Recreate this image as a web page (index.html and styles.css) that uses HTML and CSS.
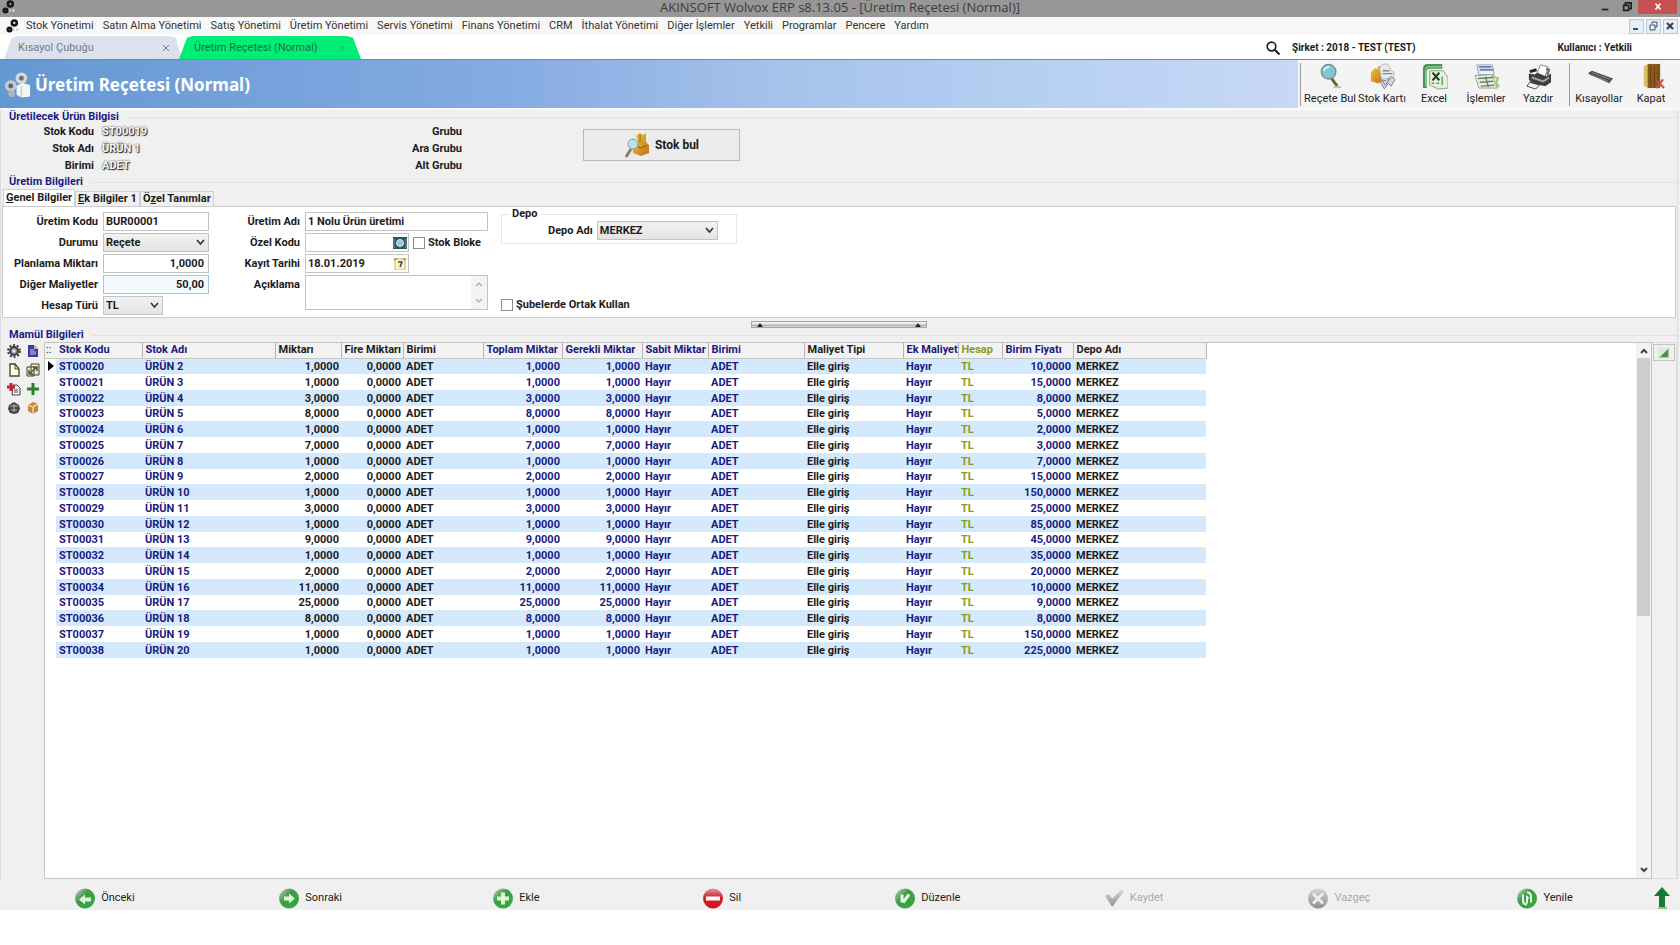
FILE: index.html
```html
<!DOCTYPE html>
<html lang="tr">
<head>
<meta charset="utf-8">
<title>AKINSOFT Wolvox ERP</title>
<link rel="stylesheet" href="styles.css">
</head>
<body>
<svg class="defs" aria-hidden="true">
  <defs>
    <linearGradient id="green" x1="0" y1="0" x2="1" y2="1"><stop offset="0" stop-color="#c9d3c9"/><stop offset=".4" stop-color="#3f9a48"/><stop offset="1" stop-color="#2fae35"/></linearGradient>
    <linearGradient id="red" x1="0" y1="0" x2="0" y2="1"><stop offset="0" stop-color="#dd9a9a"/><stop offset=".45" stop-color="#c9242c"/><stop offset="1" stop-color="#d80f18"/></linearGradient>
    <linearGradient id="grey" x1="0" y1="0" x2="0" y2="1"><stop offset="0" stop-color="#d6d6d6"/><stop offset="1" stop-color="#8e8e8e"/></linearGradient>
    <linearGradient id="gold" x1="0" y1="0" x2="1" y2="1"><stop offset="0" stop-color="#f7c948"/><stop offset="1" stop-color="#b96f10"/></linearGradient>
    <symbol id="gears" viewBox="0 0 16 16"><g fill="none" stroke="#161616" stroke-width="3"><circle cx="9.500" cy="4.500" r="2.800"/><circle cx="4" cy="12" r="2"/></g><path d="M8 12h2M11.500 12h3" stroke="#cfd4d4" stroke-width="3"/></symbol>
  </defs>
</svg>
<div class="app">
  <header class="titlebar">
    <svg class="title-icon" viewBox="0 0 16 16"><use href="#gears"/></svg>
    <h1 class="title-text">AKINSOFT Wolvox ERP s8.13.05 - [Üretim Reçetesi (Normal)]</h1>
    <div class="win-buttons">
      <button class="win-button" aria-label="Küçült"><svg viewBox="0 0 12 12"><path d="M2 9h8" stroke="#222" stroke-width="2"/></svg></button>
      <button class="win-button" aria-label="Geri yükle"><svg viewBox="0 0 12 12"><path d="M4 3V1h7v7H9M2 4h6v6H2z" fill="none" stroke="#222" stroke-width="2"/></svg></button>
      <button class="win-button win-close" aria-label="Kapat"><svg viewBox="0 0 12 12"><path d="M3 2l6 7M9 2L3 9" stroke="#fff" stroke-width="2"/></svg></button>
    </div>
  </header>

  <nav class="menubar">
    <svg class="menu-icon" viewBox="0 0 16 16"><use href="#gears"/></svg>
    <a href="#">Stok Yönetimi</a><a href="#">Satın Alma Yönetimi</a><a href="#">Satış Yönetimi</a><a href="#">Üretim Yönetimi</a><a href="#">Servis Yönetimi</a><a href="#">Finans Yönetimi</a><a href="#">CRM</a><a href="#">İthalat Yönetimi</a><a href="#">Diğer İşlemler</a><a href="#">Yetkili</a><a href="#">Programlar</a><a href="#">Pencere</a><a href="#">Yardım</a>
    <div class="mdi-buttons">
      <button class="mdi-button" aria-label="Pencereyi küçült"><svg viewBox="0 0 12 12"><path d="M3 9h5" stroke="#3d4f66" stroke-width="2"/></svg></button>
      <button class="mdi-button" aria-label="Pencereyi geri yükle"><svg viewBox="0 0 12 12"><path d="M5 4V2h5v5H8M3 5h5v5H3z" fill="none" stroke="#3d4f66"/></svg></button>
      <button class="mdi-button" aria-label="Pencereyi kapat"><svg viewBox="0 0 12 12"><path d="M3 3l6 6M9 3L3 9" stroke="#2f3f55" stroke-width="2"/></svg></button>
    </div>
  </nav>

  <div class="tabstrip">
    <a class="doc-tab" href="#">Kısayol Çubuğu<svg class="tab-x" viewBox="0 0 8 8"><path d="M1 1l6 6M7 1L1 7" stroke="#77808c"/></svg></a>
    <a class="doc-tab doc-tab-active" href="#">Üretim Reçetesi (Normal)<svg class="tab-x" viewBox="0 0 8 8"><path d="M1 1l6 6M7 1L1 7" stroke="#19c463"/></svg></a>
    <div class="session">
      <svg class="search-icon" viewBox="0 0 14 14"><circle cx="5.500" cy="5.500" r="4.300" fill="none" stroke="#222" stroke-width="1.700"/><path d="M8.500 8.500l5 5" stroke="#222" stroke-width="2.200"/></svg>
      <span class="company">Şirket : 2018 - TEST (TEST)</span>
      <span class="user">Kullanıcı : Yetkili</span>
    </div>
  </div>

  <section class="banner">
    <div class="banner-title">
      <svg class="banner-icon" viewBox="0 0 28 28"><circle cx="18" cy="7" r="6" fill="#d6dade"/><circle cx="18" cy="7" r="2.500" fill="#6a7076"/><circle cx="7" cy="15" r="6" fill="#c3c9ce"/><circle cx="7" cy="15" r="2.500" fill="#5b6168"/><circle cx="8" cy="23" r="3.500" fill="#b1b6ba"/><path d="M13 15l6-3 8 2v12l-9 1-5-3z" fill="#f3f5f7"/><path d="M18 15v12" stroke="#b8bec4"/></svg>
      <h2>Üretim Reçetesi (Normal)</h2>
    </div>
    <div class="toolbar">
      <div class="tool-group">
        <button class="tool"><svg viewBox="0 0 28 28"><path d="M15 16l6 8" stroke="#6e6338" stroke-width="3"/><path d="M17 25h8" stroke="#c9c39c" stroke-width="2"/><circle cx="12" cy="9" r="7.500" fill="#7cc9d2" stroke="#7d8f96" stroke-width="1.500"/><path d="M7 8q2-4 6-4" stroke="#d5f4f6" stroke-width="2" fill="none"/></svg>Reçete Bul</button>
        <button class="tool"><svg viewBox="0 0 28 28"><path d="M2 9l5-4 2 2V4l6-2v17l-6 2-7-2z" fill="url(#gold)"/><path d="M11 6q1-5 6-5 5 1 5 6l4 3-1 5-12 2z" fill="#e8e8e8" stroke="#b5b5b5"/><path d="M14 8h7M14 11h10" stroke="#888" stroke-width="1.500"/><path d="M11 19l5 8 4-6 3 3 4-7-4-3-5 4z" fill="#d3d5da" stroke="#858992"/><path d="M14 19l3 4 5-7" stroke="#757983" fill="none"/></svg>Stok Kartı</button>
        <button class="tool"><svg viewBox="0 0 28 28"><path d="M2 26V6q0-5 5-5h15v5H9q-3 0-3 3v17z" fill="#4b9350"/><path d="M5 24V7q0-3 3-3h13" fill="none" stroke="#b9e0b5"/><path d="M9 8h14l5 7v11l-10 1-9-4z" fill="#e3f2dc" stroke="#82a878"/><path d="M12 10l7 8M19 10l-7 8" stroke="#173919" stroke-width="2.200"/><path d="M11 21h3M16 21h3M22 14v9" stroke="#6a9b68" stroke-width="1.500"/></svg>Excel</button>
        <button class="tool"><svg viewBox="0 0 28 28"><path d="M4 2h16l2 10H6z" fill="#eef1f8" stroke="#8e9cc9"/><path d="M6 4h13M7 7h14" stroke="#6d7eb8" stroke-width="2"/><path d="M2 13l18-1 5 14H6z" fill="#e6eddc" stroke="#97a78d"/><path d="M5 16l16-1M7 20l14-1M8 24l14-1M13 14l3 11" stroke="#6e8068" stroke-width="1.500"/><path d="M19 13l7 3-2 4 3 5" stroke="#97c86f" stroke-width="2" fill="none"/></svg>İşlemler</button>
        <button class="tool"><svg viewBox="0 0 28 28"><path d="M12 12l4-10 8 2-3 10z" fill="#fff" stroke="#888"/><path d="M4 11l6 1 3-2 9 4 5-3v9l-6 4-14-3-3-4z" fill="#3d3f42"/><path d="M7 15l12 4 6-4" stroke="#a0a2a4" stroke-width="2" fill="none"/><path d="M5 20l10 3-4 4-9-3z" fill="#f4f4f4" stroke="#444"/><path d="M5 9l7-2" stroke="#222" stroke-width="3"/><path d="M22 6l3 1-2 6" stroke="#666" fill="none" stroke-width="2"/></svg>Yazdır</button>
      </div>
      <div class="tool-group tool-group-end">
        <button class="tool"><svg viewBox="0 0 28 28"><path d="M2 11l4-3 22 8-4 5z" fill="#48494c"/><path d="M6 10l19 7M4 12l19 7" stroke="#8b8c8f"/><path d="M24 21l4-5" stroke="#aaa"/></svg>Kısayollar</button>
        <button class="tool"><svg viewBox="0 0 28 28"><path d="M6 3l5-2v25l-5-2z" fill="#d8c06a"/><path d="M10 1h13v25H10z" fill="#8a5a1d"/><path d="M13 3v22M17 3v22M21 3v22" stroke="#6b4212"/><path d="M19 18l8 8M26 17l-7 9" stroke="#cf4a45" stroke-width="2.200"/></svg>Kapat</button>
      </div>
    </div>
  </section>

  <main class="content">
    <section class="product">
      <h3 class="group-title">Üretilecek Ürün Bilgisi</h3>
      <div class="product-body">
        <dl class="facts">
          <dt>Stok Kodu</dt><dd>ST00019</dd>
          <dt>Stok Adı</dt><dd>ÜRÜN 1</dd>
          <dt>Birimi</dt><dd>ADET</dd>
        </dl>
        <dl class="facts facts-groups">
          <dt>Grubu</dt><dd></dd>
          <dt>Ara Grubu</dt><dd></dd>
          <dt>Alt Grubu</dt><dd></dd>
        </dl>
        <button class="find-button"><svg viewBox="0 0 26 26"><path d="M12 4l4-3 3 2 3-2v9l3 3v8l-8 3-8-3V11l5-2z" fill="url(#gold)"/><path d="M16 2v8M12 14l5 2 6-3" stroke="#8f5a10" fill="none"/><path d="M7 17l-5 8" stroke="#8d7a78" stroke-width="3"/><circle cx="9" cy="12" r="5" fill="#b9e2ee" stroke="#8a9ba5"/></svg>Stok bul</button>
      </div>
    </section>

    <section class="production">
      <h3 class="group-title">Üretim Bilgileri</h3>
      <div class="page-tabs" role="tablist">
        <button class="page-tab page-tab-active" role="tab"><u>G</u>enel Bilgiler</button><button class="page-tab" role="tab"><u>E</u>k Bilgiler 1</button><button class="page-tab" role="tab">Ö<u>z</u>el Tanımlar</button>
      </div>
      <form class="page">
        <div class="fields fields-left">
          <label for="kod">Üretim Kodu</label><input id="kod" class="box" value="BUR00001">
          <label for="durum">Durumu</label><select id="durum" class="box pick"><option>Reçete</option></select>
          <label for="miktar">Planlama Miktarı</label><input id="miktar" class="box number" value="1,0000">
          <label for="maliyet">Diğer Maliyetler</label><input id="maliyet" class="box number box-focus" value="50,00">
          <label for="hesap">Hesap Türü</label><select id="hesap" class="box pick pick-short"><option>TL</option></select>
        </div>
        <div class="fields fields-mid">
          <label for="ad">Üretim Adı</label><input id="ad" class="box" value="1 Nolu Ürün üretimi">
          <label for="ozel">Özel Kodu</label>
          <div class="row">
            <div class="with-button"><input id="ozel" class="box"><button type="button" class="inner-button" aria-label="Özel kod seç"><svg viewBox="0 0 14 12"><path d="M0 0h14v12H0z" fill="#2c5963"/><circle cx="7" cy="6" r="3.500" fill="#9fc7d2" stroke="#d6e6ea"/><path d="M1 2v9M13 2v9" stroke="#7b98a0"/></svg></button></div>
            <label class="check"><input type="checkbox">Stok Bloke</label>
          </div>
          <label for="tarih">Kayıt Tarihi</label>
          <div class="row">
            <div class="with-button"><input id="tarih" class="box" value="18.01.2019"><button type="button" class="inner-button" aria-label="Tarih seç"><svg viewBox="0 0 14 12"><path d="M2 1h10v11H2z" fill="#fff6c4" stroke="#c9b36b"/><path d="M1 2l3-2M13 2l-3-2" stroke="#b59a3c" stroke-width="2"/><path d="M5 4h4l-2 5" stroke="#3c3c6a" stroke-width="1.500" fill="none"/></svg></button></div>
          </div>
          <label for="aciklama">Açıklama</label>
          <div class="memo"><textarea id="aciklama" class="box"></textarea><div class="memo-bar"><svg viewBox="0 0 8 6"><path d="M1 5l3-3 3 3" fill="none" stroke="#b0b0b0" stroke-width="1.500"/></svg><svg viewBox="0 0 8 6"><path d="M1 1l3 3 3-3" fill="none" stroke="#b0b0b0" stroke-width="1.500"/></svg></div></div>
        </div>
        <div class="fields-right">
          <fieldset class="depot"><legend>Depo</legend><label for="depo">Depo Adı</label><select id="depo" class="box pick"><option>MERKEZ</option></select></fieldset>
          <label class="check"><input type="checkbox">Şubelerde Ortak Kullan</label>
        </div>
      </form>
    </section>

    <div class="splitter"><button class="splitter-grip" aria-label="Bölmeyi daralt"><i></i><i></i></button></div>

    <section class="materials">
      <h3 class="group-title">Mamül Bilgileri</h3>
      <div class="materials-body">
        <div class="side-tools">
          <button aria-label="Ayarlar"><svg viewBox="0 0 14 14"><circle cx="7" cy="7" r="4" fill="#999" stroke="#3c3c3c" stroke-width="2"/><circle cx="7" cy="7" r="6" fill="none" stroke="#3c3c3c" stroke-width="1.800" stroke-dasharray="2 1.800"/><circle cx="7" cy="7" r="1.500" fill="#eee"/></svg></button>
          <button aria-label="Rapor"><svg viewBox="0 0 14 14"><path d="M2 1h6l4 4v8H2z" fill="#3b3b9d"/><path d="M4 6h4M4 8h6M4 10h6" stroke="#c8c8f0"/><path d="M8 1v4h4" fill="#bbb"/></svg></button>
          <button aria-label="Yeni"><svg viewBox="0 0 14 14"><path d="M3 1h5l4 5v7H3z" fill="#fffff0" stroke="#444422" stroke-width="1.300"/><path d="M8 1v5h4" fill="none" stroke="#444422"/></svg></button>
          <button aria-label="Kopyala"><svg viewBox="0 0 14 14"><path d="M1 4h7v9H1zM5 1h8v11H5z" fill="#eeedd0" stroke="#454530"/><path d="M3 11l8-7M7 4h4v4M3 7v4h4" fill="none" stroke="#56563a" stroke-width="1.500"/></svg></button>
          <button aria-label="Kaydı sil"><svg viewBox="0 0 14 14"><path d="M6 3h4l3 3v7H5z" fill="#eee" stroke="#444"/><path d="M7 8h4M7 10h4" stroke="#555"/><path d="M4 1v8M0 5h8" stroke="#c3203b" stroke-width="3"/></svg></button>
          <button aria-label="Ekle"><svg viewBox="0 0 14 14"><path d="M7 1v12M1 7h12" stroke="#23852c" stroke-width="3"/></svg></button>
          <button aria-label="Ürün"><svg viewBox="0 0 14 14"><path d="M2 4l5-3 5 3 1 4-2 4-4 1-4-1-2-4z" fill="#454545"/><path d="M3 5h8M4 9h6M7 3v8" stroke="#bbb"/></svg></button>
          <button aria-label="Paket"><svg viewBox="0 0 14 14"><path d="M2 4l5-3 5 2v7l-5 3-5-3z" fill="#c8853c"/><path d="M2 4l5 2 5-3M7 6v7" stroke="#f3d3a3" fill="none" stroke-width="1.500"/></svg></button>
        </div>
        <div class="grid-box">
          <table class="grid">
            <colgroup><col class="w-mark"><col class="w-code"><col class="w-name"><col class="w-qty"><col class="w-waste"><col class="w-unit"><col class="w-total"><col class="w-unit"><col class="w-fixed"><col class="w-unit2"><col class="w-cost"><col class="w-extra"><col class="w-account"><col class="w-price"><col class="w-name"></colgroup>
            <thead><tr><th class="mark">::</th><th class="navy">Stok Kodu</th><th class="navy">Stok Adı</th><th>Miktarı</th><th>Fire Miktarı</th><th>Birimi</th><th class="navy">Toplam Miktar</th><th class="navy">Gerekli Miktar</th><th class="navy">Sabit Miktar</th><th class="navy">Birimi</th><th>Maliyet Tipi</th><th class="navy">Ek Maliyet</th><th class="olive">Hesap</th><th class="navy">Birim Fiyatı</th><th>Depo Adı</th></tr></thead>
            <tbody id="rows"></tbody>
          </table>
          <div class="scrollbar"><svg viewBox="0 0 10 8"><path d="M2 6l3-3 3 3" fill="none" stroke="#444" stroke-width="2"/></svg><div class="track"><div class="thumb"></div></div><svg viewBox="0 0 10 8"><path d="M2 2l3 3 3-3" fill="none" stroke="#444" stroke-width="2"/></svg></div>
        </div>
        <div class="side-right"><button aria-label="Genişlet"><svg viewBox="0 0 14 14"><path d="M0 0h14v14H0z" fill="#d7efd2"/><path d="M12 2v10H2z" fill="#4e8f4c"/></svg></button></div>
      </div>
    </section>
  </main>

  <footer class="actions">
    <div class="action-list">
      <button class="action"><svg viewBox="0 0 20 20"><circle cx="10" cy="10" r="10" fill="url(#green)"/><path d="M4 11l6-5v3h6v4h-6v3z" fill="#dcf7d6"/></svg>Önceki</button>
      <button class="action"><svg viewBox="0 0 20 20"><circle cx="10" cy="10" r="10" fill="url(#green)"/><path d="M16 10l-6-5v3H5v4h5v3z" fill="#dcf7d6"/></svg>Sonraki</button>
      <button class="action"><svg viewBox="0 0 20 20"><circle cx="10" cy="10" r="10" fill="url(#green)"/><path d="M10 4v12M4 10h12" stroke="#d9f8d4" stroke-width="4"/></svg>Ekle</button>
      <button class="action"><svg viewBox="0 0 20 20"><circle cx="10" cy="10" r="10" fill="url(#red)"/><path d="M3 10h14" stroke="#fff" stroke-width="4"/></svg>Sil</button>
      <button class="action"><svg viewBox="0 0 20 20"><circle cx="10" cy="10" r="10" fill="url(#green)"/><path d="M7 14V6M8 14l6-8" stroke="#e6fbe2" stroke-width="3"/></svg>Düzenle</button>
      <button class="action" disabled><svg viewBox="0 0 22 20"><path d="M1 7l4-2 4 5 9-9 4 1L9 19z" fill="url(#grey)"/></svg>Kaydet</button>
      <button class="action" disabled><svg viewBox="0 0 20 20"><circle cx="10" cy="10" r="10" fill="url(#grey)"/><path d="M5 5l10 10M15 5L5 15" stroke="#eee" stroke-width="3"/></svg>Vazgeç</button>
      <button class="action"><svg viewBox="0 0 20 20"><circle cx="10" cy="10" r="10" fill="url(#green)"/><path d="M6 6v6q0 4 4 4M14 14V8q0-4-4-4" stroke="#e6fbe2" stroke-width="2" fill="none"/><path d="M10 7l3 3h-2v5H9V7z" fill="#e6fbe2"/></svg>Yenile</button>
    </div>
    <button class="up" aria-label="Yukarı"><svg viewBox="0 0 16 22"><path d="M8 0l8 9h-5v11H5V9H0z" fill="#177a2c"/><path d="M4 21h9" stroke="#8cbf95" stroke-width="2"/></svg></button>
  </footer>
</div>
<script src="grid.js"></script>
</body>
</html>
```
FILE: styles.css
```css
* { box-sizing: border-box; }
body { margin: 0; background: #fff; color: #1c1c1c; font: bold 11px/16px Roboto, "Noto Sans", sans-serif; }
button, input, select, textarea { font: inherit; color: inherit; margin: 0; padding: 0; }
button { background: none; border: 0; }
h1, h2, h3, dl, dd { margin: 0; font: inherit; }
a { color: inherit; text-decoration: none; }
svg { display: block; flex: none; }
.defs { position: absolute; width: 0; height: 0; }
.app { display: flex; flex-direction: column; min-height: 910px; margin-bottom: 35px; background: #f0f0f0; }

.titlebar { display: grid; grid-template-columns: 1fr auto 1fr; height: 17px; background: #979797; }
.title-icon { width: 14px; height: 14px; margin-left: 2px; }
.title-text { color: #3c3c3c; font: 13px/15px "Open Sans", sans-serif; }
.win-buttons { display: flex; justify-content: flex-end; padding-right: 3px; }
.win-button { display: flex; align-items: center; justify-content: center; width: 22px; height: 14px; }
.win-button svg { width: 10px; height: 10px; }
.win-close { width: 39px; background: #c75052; }

.menubar { display: flex; align-items: center; gap: 9px; height: 18px; padding: 0 2px 0 6px; background: #f8f8f8; color: #333; font-weight: normal; white-space: nowrap; }
.menu-icon { width: 14px; height: 16px; margin-right: -3px; }
.mdi-buttons { display: flex; gap: 2px; margin-left: auto; }
.mdi-button { width: 15px; height: 15px; border: 1px solid #b9cade; background: #e6eff8; }
.mdi-button svg { width: 12px; height: 12px; }

.tabstrip { display: flex; height: 25px; padding: 1px 0 0 4px; border-bottom: 1px solid #7d8894; background: #fff; }
.doc-tab { display: flex; align-items: center; justify-content: space-between; width: 178px; padding: 0 12px 0 14px; background: #dbe2ec; color: #707a86; clip-path: polygon(0 100%, 8px 8%, 14px 0, 166px 0, 172px 8%, 100% 100%); font-weight: normal; }
.doc-tab-active { width: 182px; padding-left: 15px; padding-right: 15px; margin-left: -3px; background: #00ee76; color: #14743f; clip-path: polygon(0 100%, 8px 8%, 14px 0, 168px 0, 174px 8%, 100% 100%); }
.tab-x { width: 8px; height: 8px; }
.session { display: flex; align-items: center; margin-left: auto; padding-right: 48px; font-size: 10px; }
.search-icon { width: 14px; height: 14px; margin-right: 12px; }
.company { margin-right: 142px; }

.banner { display: flex; height: 50px; border-bottom: 2px solid #fafafa; background: #f4f4f4; }
.banner-title { flex: 1; display: flex; align-items: center; gap: 4px; padding: 2px 0 0 4px; background: linear-gradient(90deg, #6498d2, #84aae2 38%, #a5c2ea 60%, #b6d0f2 80%, #c8d8f6); }
.banner-icon { width: 27px; height: 28px; }
.banner-title h2 { color: #fff; font: bold 17px/24px "Noto Sans", sans-serif; }
.toolbar { display: flex; padding: 3px 3px 0 2px; }
.tool-group { display: flex; height: 43px; padding-left: 3px; border-left: 1px solid #9b9b9b; }
.tool { display: flex; flex-direction: column; align-items: center; width: 52px; font-weight: normal; line-height: 17px; white-space: nowrap; }
.tool svg { width: 27px; height: 27px; }
.tool-group-end { margin-left: 5px; }

.content { flex: 1; display: flex; flex-direction: column; margin-right: 2px; border: solid #dcdcdc; border-width: 0 1px; }
.group-title { display: flex; align-items: center; gap: 8px; padding-left: 8px; color: #1e1c86; line-height: 14px; }
.group-title::after { content: ""; flex: 1; border-top: 1px solid #e2e2e2; }

.product-body { display: flex; }
.facts { display: grid; grid-template-columns: 93px 270px; grid-auto-rows: 17px; column-gap: 8px; line-height: 16px; }
.facts dt { text-align: right; }
.facts dd { color: #fafafa; text-shadow: 1px 1px 1px #222, 0 0 2px #222; }
.facts-groups { grid-template-columns: 90px 105px; }
.find-button { display: flex; align-items: center; justify-content: center; gap: 5px; width: 157px; height: 32px; margin: 5px 0 10px 8px; border: 1px solid #b9b9b9; background: #ececec; font-size: 12px; }
.find-button svg { width: 26px; height: 26px; }

.page-tabs { display: flex; align-items: flex-end; height: 17px; padding-left: 2px; }
.page-tab { height: 15px; padding: 0 2px; border: 1px solid #cfcfcf; border-bottom: 0; line-height: 14px; white-space: nowrap; }
.page-tab-active { height: 17px; background: #fff; }
.page { display: flex; margin: 0 1px; padding: 5px 0 2px; border: 1px solid #cbcbcb; background: #fff; }
.fields { display: grid; grid-auto-rows: 19px; row-gap: 2px; column-gap: 5px; align-items: center; }
.fields > label { text-align: right; line-height: 19px; white-space: nowrap; }
.fields-left { grid-template-columns: 95px 106px; }
.fields-mid { grid-template-columns: 91px 183px; }
.box { display: block; width: 100%; height: 19px; padding: 0 2px; border: 1px solid #c3c3c3; border-radius: 0; background: #fff; line-height: 16px; outline: 0; }
.number { padding-right: 4px; text-align: right; }
.box-focus { border-color: #a9c5dc; background: #f4fbff; }
.pick { appearance: none; background: url("data:image/svg+xml,%3Csvg xmlns='http://www.w3.org/2000/svg' width='9' height='7'%3E%3Cpath d='M1 1l3.500 4L8 1' fill='none' stroke='%23333' stroke-width='1.600'/%3E%3C/svg%3E") no-repeat right 3px center, linear-gradient(#f2f2f2, #e4e4e4); }
.pick-short { width: 60px; }
.row { display: flex; align-items: center; gap: 4px; }
.with-button { display: flex; width: 104px; height: 19px; border: 1px solid #c3c3c3; }
.with-button .box { flex: 1; width: 0; height: 17px; border: 0; }
.inner-button { width: 16px; padding: 2px 1px; }
.inner-button svg { width: 14px; height: 12px; }
.check { display: flex; align-items: center; gap: 3px; line-height: 16px; white-space: nowrap; }
.check input { appearance: none; width: 12px; height: 12px; border: 1px solid #8d8d8d; background: #fff; }
.memo { display: flex; grid-row: span 2; align-self: start; height: 35px; border: 1px solid #c3c3c3; }
.memo textarea { flex: 1; width: 0; height: 33px; border: 0; resize: none; }
.memo-bar { display: flex; flex-direction: column; justify-content: space-between; width: 16px; padding: 5px 4px; background: #f4f4f4; }
.memo-bar svg { width: 8px; height: 6px; }
.fields-right { display: flex; flex-direction: column; justify-content: space-between; padding: 0 0 2px 13px; }
.depot { display: flex; align-items: center; gap: 4px; width: 236px; height: 37px; margin: -5px 0 0; padding: 0 18px 4px 46px; border: 1px solid #e6e6e6; }
.depot legend { margin-left: -38px; padding: 0 2px; line-height: 14px; }
.depot .pick { flex: 1; }
.depot label { white-space: nowrap; }

.splitter { display: flex; justify-content: center; height: 10px; padding-top: 3px; }
.splitter-grip { display: flex; align-items: center; justify-content: space-between; width: 176px; height: 7px; padding: 0 5px; border: 1px solid #a8a8a8; background: linear-gradient(#ededed 40%, #aaa 60%, #ddd); }
.splitter-grip i { border: 3px solid transparent; border-top: 0; border-bottom: 4px solid #222; }

.materials { flex: 1; display: flex; flex-direction: column; }
.materials-body { flex: 1; display: flex; }
.side-tools { display: grid; grid-template-columns: 14px 14px; grid-auto-rows: 14px; gap: 5px; align-content: start; width: 43px; padding: 2px 0 0 6px; }
.side-tools svg { width: 14px; height: 14px; }
.grid-box { flex: 1; display: flex; justify-content: space-between; border: 1px solid #c4c4c4; background: #fff; }
.grid { table-layout: fixed; width: 1161px; height: min-content; border-collapse: collapse; }
.grid th, .grid td { height: 16px; padding: 0 2px 0 3px; line-height: 15px; text-align: left; white-space: nowrap; }
.grid tbody tr:nth-child(4n) td { height: 15px; }
.grid th { height: 15px; line-height: 14px; border-right: 1px solid #b5b5b5; border-bottom: 1px solid #c6c6c6; background: #f2f2f2; }
.grid .mark { padding: 0 0 0 1px; border-right: 0; font-weight: normal; }
.grid tbody tr:nth-child(odd) td { background: #d4eafc; }
.grid tbody tr td.mark { background: #fff; }
.grid .num { text-align: right; }
.grid .navy { color: #1a1a80; }
.grid .olive { color: #8a9a1c; }
.cursor { display: block; width: 0; margin-left: 2px; border: 5px solid transparent; border-right: 0; border-left: 6px solid #000; }
.w-mark { width: 11px; } .w-code { width: 86px; } .w-name { width: 133px; } .w-qty { width: 66px; } .w-waste { width: 62px; }
.w-unit { width: 80px; } .w-total { width: 79px; } .w-fixed { width: 66px; } .w-unit2 { width: 96px; } .w-cost { width: 99px; }
.w-extra { width: 55px; } .w-account { width: 44px; } .w-price { width: 71px; }
.scrollbar { display: flex; flex-direction: column; align-items: center; width: 15px; padding: 4px 1px; background: #f3f3f3; }
.scrollbar svg { width: 10px; height: 8px; }
.track { flex: 1; align-self: stretch; padding: 3px 0; }
.thumb { height: 51%; background: #cdcdcd; }
.side-right { width: 25px; padding: 1px; border: 1px solid #dcdcdc; border-width: 1px 1px 1px 0; }
.side-right button { display: flex; align-items: center; justify-content: center; width: 22px; height: 17px; border: 1px solid #c2c2c2; }
.side-right svg { width: 12px; height: 12px; }

.actions { display: flex; align-items: center; height: 31px; padding: 7px 10px 0 2px; }
.action-list { flex: 1; display: grid; grid-template-columns: repeat(8, 1fr); }
.action { display: flex; align-items: center; justify-content: center; gap: 6px; font-weight: normal; line-height: 20px; }
.action svg { width: 20px; height: 21px; }
.action:disabled { color: #aaa; }
.up { margin-left: 6px; }
.up svg { width: 16px; height: 22px; }
```
FILE: grid.js
```js
const items = [
  ["1,0000", "10,0000"], ["1,0000", "15,0000"], ["3,0000", "8,0000"], ["8,0000", "5,0000"], ["1,0000", "2,0000"],
  ["7,0000", "3,0000"], ["1,0000", "7,0000"], ["2,0000", "15,0000"], ["1,0000", "150,0000"], ["3,0000", "25,0000"],
  ["1,0000", "85,0000"], ["9,0000", "45,0000"], ["1,0000", "35,0000"], ["2,0000", "20,0000"], ["11,0000", "10,0000"],
  ["25,0000", "9,0000"], ["8,0000", "8,0000"], ["1,0000", "150,0000"], ["1,0000", "225,0000"]
];
document.getElementById("rows").innerHTML = items.map(([qty, price], i) => `<tr>
  <td class="mark">${i === 0 ? '<span class="cursor"></span>' : ""}</td>
  <td class="navy">ST000${20 + i}</td><td class="navy">ÜRÜN ${2 + i}</td>
  <td class="num">${qty}</td><td class="num">0,0000</td><td>ADET</td>
  <td class="num navy">${qty}</td><td class="num navy">${qty}</td><td class="navy">Hayır</td><td class="navy">ADET</td>
  <td>Elle giriş</td><td class="navy">Hayır</td><td class="olive">TL</td>
  <td class="num navy">${price}</td><td>MERKEZ</td></tr>`).join("");
```
